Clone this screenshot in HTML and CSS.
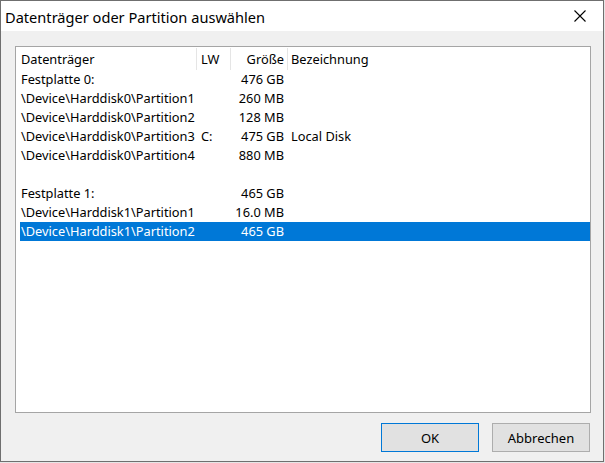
FILE: index.html
```html
<!DOCTYPE html>
<html lang="de">
<head>
<meta charset="utf-8">
<title>Datenträger oder Partition auswählen</title>
<link rel="stylesheet" href="styles.css">
</head>
<body>
<div class="window">
  <div class="titlebar">
    <span class="title">Datenträger oder Partition auswählen</span>
    <div class="close">
      <svg width="12" height="12" viewBox="0 0 12 12"><path d="M0.5 0.5 L11.5 11.5 M11.5 0.5 L0.5 11.5" stroke="#000" stroke-width="1.1" fill="none"/></svg>
    </div>
  </div>
  <div class="content">
    <div class="list">
      <div class="row header">
        <div class="cell c1">Datenträger</div>
        <div class="cell c2">LW</div>
        <div class="cell c3">Größe</div>
        <div class="cell c4">Bezeichnung</div>
      </div>
      <div class="row"><div class="cell c1">Festplatte 0:</div><div class="cell c2"></div><div class="cell c3">476 GB</div><div class="cell c4"></div></div>
      <div class="row"><div class="cell c1">\Device\Harddisk0\Partition1</div><div class="cell c2"></div><div class="cell c3">260 MB</div><div class="cell c4"></div></div>
      <div class="row"><div class="cell c1">\Device\Harddisk0\Partition2</div><div class="cell c2"></div><div class="cell c3">128 MB</div><div class="cell c4"></div></div>
      <div class="row"><div class="cell c1">\Device\Harddisk0\Partition3</div><div class="cell c2">C:</div><div class="cell c3">475 GB</div><div class="cell c4">Local Disk</div></div>
      <div class="row"><div class="cell c1">\Device\Harddisk0\Partition4</div><div class="cell c2"></div><div class="cell c3">880 MB</div><div class="cell c4"></div></div>
      <div class="row"><div class="cell c1"></div><div class="cell c2"></div><div class="cell c3"></div><div class="cell c4"></div></div>
      <div class="row"><div class="cell c1">Festplatte 1:</div><div class="cell c2"></div><div class="cell c3">465 GB</div><div class="cell c4"></div></div>
      <div class="row"><div class="cell c1">\Device\Harddisk1\Partition1</div><div class="cell c2"></div><div class="cell c3">16.0 MB</div><div class="cell c4"></div></div>
      <div class="row selected"><div class="cell c1">\Device\Harddisk1\Partition2</div><div class="cell c2"></div><div class="cell c3">465 GB</div><div class="cell c4"></div></div>
    </div>
    <div class="buttons">
      <button class="btn default">OK</button>
      <button class="btn">Abbrechen</button>
    </div>
  </div>
</div>
</body>
</html>
```

FILE: styles.css
```css
html, body {
  margin: 0;
  padding: 0;
  background: #e6e6e6;
}
body {
  font-family: "Noto Sans", "Open Sans", sans-serif;
  color: #000;
}
.window {
  width: 604px;
  height: 462px;
  box-sizing: border-box;
  border: 1px solid #6f6f6f;
  background: #f0f0f0;
  display: flex;
  flex-direction: column;
}
.titlebar {
  height: 30px;
  background: #fff;
  display: flex;
  align-items: center;
  justify-content: space-between;
}
.title {
  font-size: 14.6px;
  padding-left: 4px;
  padding-top: 1px;
  white-space: nowrap;
}
.close {
  width: 46px;
  height: 30px;
  display: flex;
  align-items: center;
  justify-content: center;
}
.close svg {
  display: block;
}
.content {
  flex: 1;
  padding: 15px 13px 9px 14px;
  display: flex;
  flex-direction: column;
}
.list {
  width: 576px;
  height: 367px;
  box-sizing: border-box;
  border: 1px solid #a5a5a5;
  background: #fff;
  font-size: 12.8px;
}
.row {
  display: grid;
  grid-template-columns: 181px 34px 57px 1fr;
  height: 19px;
  line-height: 19px;
}
.row.header {
  height: 23px;
  line-height: 22px;
  padding-top: 1px;
  box-sizing: border-box;
}
.cell {
  box-sizing: border-box;
  white-space: nowrap;
  overflow: hidden;
  border-right: 1px solid transparent;
}
.header .cell {
  border-right-color: #e5e5e5;
}
.header .c4 {
  border-right-color: transparent;
}
.c1 {
  padding-left: 5px;
}
.c2 {
  padding-left: 4px;
}
.c3 {
  text-align: right;
  padding-right: 3px;
}
.c4 {
  padding-left: 3px;
}
.row.selected {
  background: linear-gradient(to right, transparent 4px, #0078d7 4px);
  color: #fff;
}
.buttons {
  margin-top: 10px;
  display: flex;
  justify-content: flex-end;
  gap: 13px;
}
.btn {
  width: 98px;
  height: 29px;
  box-sizing: border-box;
  border: 1px solid #adadad;
  background: #e1e1e1;
  font-family: "Noto Sans", "Open Sans", sans-serif;
  font-size: 13px;
  color: #000;
  padding: 0;
  margin: 0;
}
.btn.default {
  border-color: #0078d7;
}
```
